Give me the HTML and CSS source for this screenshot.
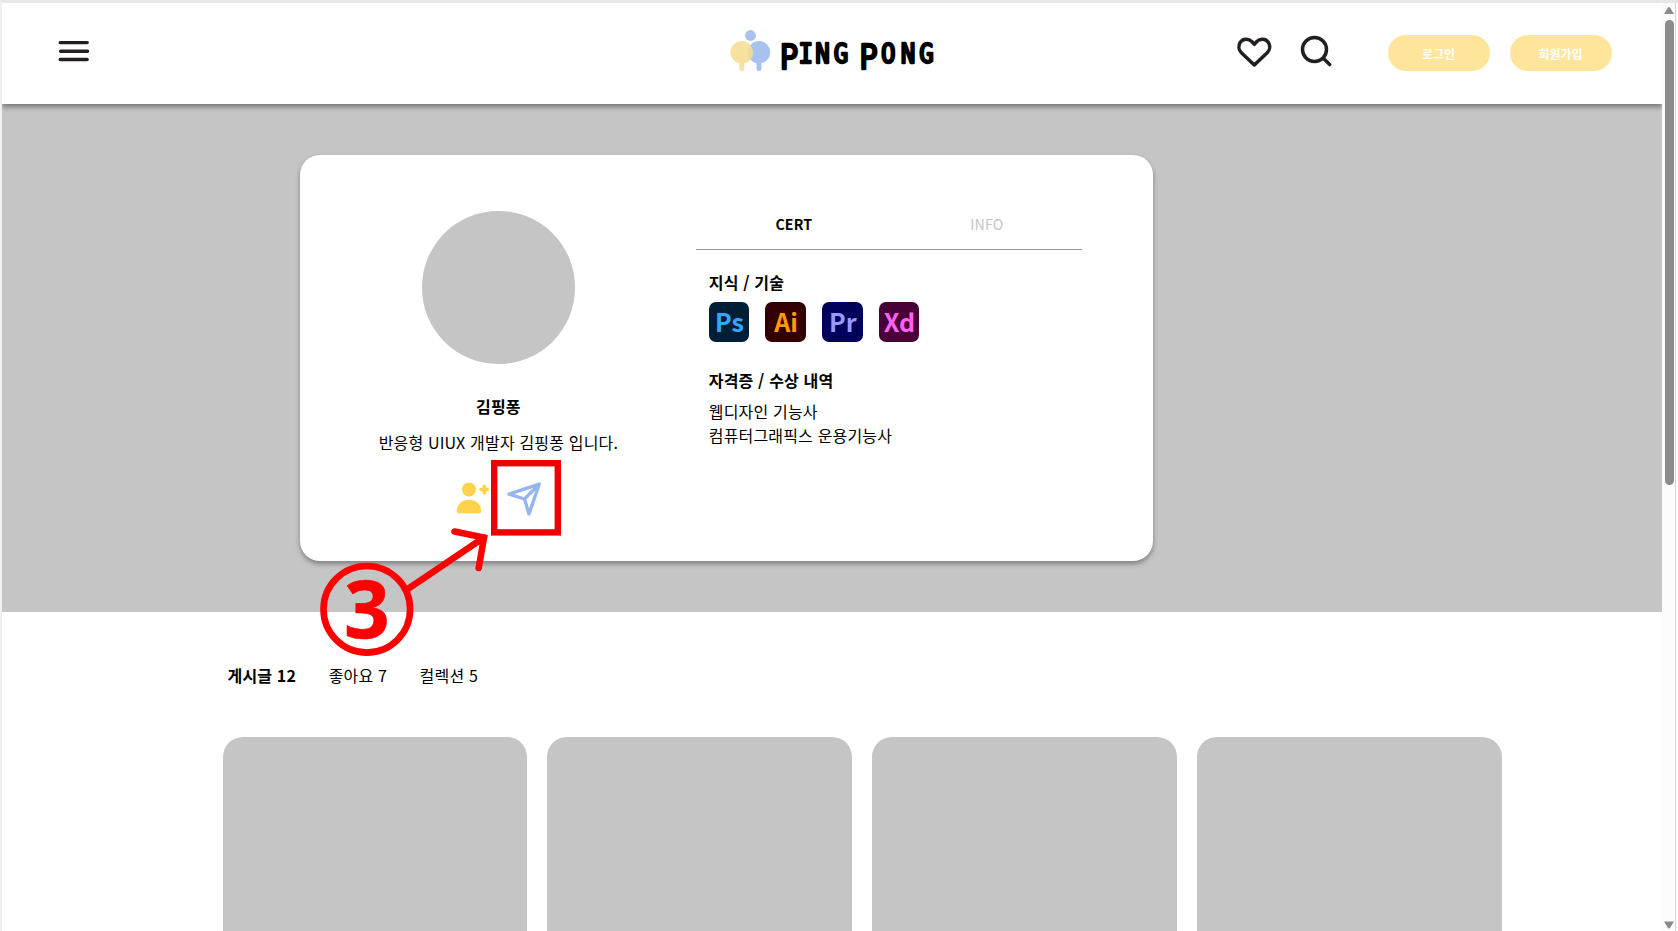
FILE: index.html
```html
<!DOCTYPE html>
<html lang="ko">
<head>
<meta charset="utf-8">
<title>PING PONG</title>
<link rel="stylesheet" href="styles.css">
</head>
<body>
<div class="window">
  <div class="page">
    <header class="header">
      <svg class="menu" width="32" height="22" viewBox="0 0 32 22"><path d="M2.2 2.6h27M2.6 11.2h27M2.2 19.5h27"/></svg>
      <svg class="logo" width="212" height="56" viewBox="0 0 212 56">
        <g fill="#a8c2f0"><circle cx="20.5" cy="7.5" r="5.4"/><circle cx="29" cy="24.3" r="11.2"/><rect x="26.5" y="32" width="5" height="11" rx="2.5"/></g>
        <g fill="#f5dc93" fill-opacity=".87"><path d="M12 13.100a11.200 11.200 0 0 1 2.300 22.160V40.500a2.500 2.500 0 0 1-5 0V35.260A11.200 11.200 0 0 1 12 13.100z"/></g>
        <text class="logo-text" transform="scale(.93 1)"><tspan class="tall" x="53.500" y="40.700">P</tspan><tspan x="73.700 91.600 111.500" y="34.800">ING</tspan> <tspan class="tall" x="138.900" y="40.700">P</tspan><tspan x="162.500 183.500 203.600" y="34.800">ONG</tspan></text>
      </svg>
      <nav class="actions">
        <svg class="heart" width="37" height="32" viewBox="0 0 37 32"><path d="M18.300 8.300L15.800 5.500C12.500 2.200 7 2.500 4.300 6.300C2 9.800 2.700 14 5.400 16.700L18.300 29L31.200 16.700C33.900 14 34.600 9.800 32.300 6.300C29.600 2.500 24.100 2.200 20.800 5.500z"/></svg>
        <svg class="search" width="33" height="33" viewBox="0 0 33 33"><circle cx="14.500" cy="14.500" r="12"/><path d="M23.500 23.500l6.200 6.100"/></svg>
        <button class="pill">로그인</button>
        <button class="pill">회원가입</button>
      </nav>
    </header>
    <section class="hero">
      <article class="card">
        <div class="profile">
          <div class="avatar"></div>
          <h1 class="name">김핑퐁</h1>
          <p class="bio">반응형 UIUX 개발자 김핑퐁 입니다.</p>
          <div class="icons">
            <svg width="34" height="36" viewBox="0 0 34 36" fill="#ffd24d"><circle cx="13" cy="9.500" r="7"/><path d="M.8 31.500C.8 24 6 19.700 13 19.700S25.200 24 25.200 31.500q0 1.800-1.500 1.800H2.300Q.8 33.300.8 31.500z"/><path d="M28.300 6.300v6.600M25 9.600h6.600" fill="none" stroke="#ffd24d" stroke-width="3.500" stroke-linecap="round"/></svg>
            <svg width="36" height="36" viewBox="0 0 36 36" fill="none" stroke="#95b5ee" stroke-width="3.400" stroke-linejoin="round"><path d="M3 14.200L33.200 4.100L23 34L18.500 19z M18.500 19L33.200 4.100"/></svg>
          </div>
        </div>
        <div class="details">
          <div class="tabs"><span class="tab active">CERT</span><span class="tab">INFO</span></div>
          <div class="facts">
            <h2>지식 / 기술</h2>
            <div class="skills"><span class="skill ps">Ps</span><span class="skill ai">Ai</span><span class="skill pr">Pr</span><span class="skill xd">Xd</span></div>
            <h2>자격증 / 수상 내역</h2>
            <p class="certs">웹디자인 기능사<br>컴퓨터그래픽스 운용기능사</p>
          </div>
        </div>
      </article>
    </section>
    <section class="posts">
      <nav class="filters"><b>게시글 12</b><span>좋아요 7</span><span>컬렉션 5</span></nav>
      <div class="grid"><div></div><div></div><div></div><div></div></div>
    </section>
  </div>
  <aside class="scrollbar">
    <svg width="12" height="10" viewBox="0 0 12 10"><path d="M1 9L5 2.500Q6 1.500 7 2.500L11 9z"/></svg>
    <div class="thumb"></div>
    <svg width="12" height="10" viewBox="0 0 12 10"><path d="M1 1.500H11L7 8Q6 9 5 8z"/></svg>
  </aside>
</div>
<svg class="annotation" width="260" height="210" viewBox="310 455 260 210">
  <rect x="494.200" y="463.200" width="63.600" height="69.200" fill="none" stroke="#e00" stroke-width="6.400"/>
  <g fill="none" stroke="#f00" stroke-width="6.600" stroke-linecap="round">
    <circle cx="366.800" cy="609.300" r="43.300"/>
    <path d="M408.500 588.500L484 537.500M454.500 531.500L484 537.500L478.700 568"/>
  </g>
  <text x="366.800" y="638.300" class="step">3</text>
</svg>
</body>
</html>
```
FILE: styles.css
```css
* { box-sizing: border-box; margin: 0; padding: 0; }
html, body { width: 100%; height: 100%; overflow: hidden; }
body {
  position: relative;
  background: #fff;
  color: #000;
  font: 16px/24px "Noto Sans CJK KR", sans-serif;
  letter-spacing: .17px;
}
svg { display: block; flex: none; }
.window {
  display: flex;
  height: 931px;
  border-top: 3px solid #e7e7e7;
  border-left: 2px solid #f0f0f0;
  overflow: hidden;
}
.page { width: 1660px; flex: none; }

.header {
  position: relative;
  display: flex;
  align-items: flex-start;
  height: 101px;
  padding-left: 56px;
  background: #fff;
  box-shadow: 0 3px 5px rgba(0, 0, 0, .4);
  clip-path: inset(0 0 -12px 0);
}
.menu { margin-top: 37px; stroke: #231f20; stroke-width: 3.4; stroke-linecap: round; fill: none; }
.logo { margin: 25px 0 0 640px; }
.logo-text {
  font: 26px "DejaVu Sans Mono", monospace;
  letter-spacing: 0;
  stroke: #000;
  stroke-width: 2.3;
  stroke-linejoin: round;
}
.tall { font-size: 33px; }
.actions { display: flex; margin-left: 294px; }
.heart { margin-top: 32.500px; }
.search { margin: 32px 0 0 27px; }
.heart, .search { fill: none; stroke: #231f20; stroke-width: 3.5; stroke-linejoin: round; stroke-linecap: round; }
.pill {
  width: 102px;
  height: 36px;
  margin: 32px 0 0 20px;
  border: 0;
  border-radius: 18px;
  background: #ffe59b;
  color: #fff;
  font: bold 12px/37px "Noto Sans CJK KR", sans-serif;
}
.search + .pill { margin-left: 54.500px; }

.hero { height: 508px; padding: 51px 0 0 298.400px; background: #c5c5c5; }
.card {
  display: flex;
  width: 853px;
  height: 406px;
  border-radius: 20px;
  background: #fff;
  box-shadow: 0 3px 5px rgba(0, 0, 0, .35);
}
.profile { display: flex; flex-direction: column; align-items: center; width: 396px; padding-top: 56px; }
.avatar { width: 152.500px; height: 152.500px; border-radius: 50%; background: #c5c5c5; }
.name { margin-top: 30px; font-size: 16px; line-height: 24px; }
.bio { margin-top: 12px; white-space: nowrap; }
.icons { display: flex; gap: 15.500px; margin-top: 26px; padding-left: 1px; }
.details { width: 386px; padding-top: 45px; }
.tabs { display: flex; height: 50px; border-bottom: 1px solid #999; }
.tab { flex: 1; padding-left: 2px; text-align: center; font-size: 14.200px; line-height: 48px; color: #c4c4c4; }
.tab.active { color: #000; font-weight: bold; }
.facts { padding: 20px 0 0 12.400px; }
h2 { font-size: 16px; line-height: 24px; }
.skills { display: flex; gap: 16.300px; margin: 8px 0 26px; }
.skill {
  width: 40.400px;
  height: 40.400px;
  padding-left: 1px;
  border-radius: 7px;
  text-align: center;
  font: bold 25px/38px "Noto Sans CJK KR", sans-serif;
}
.ps { background: #001e36; color: #31a8ff; }
.ai { background: #330000; color: #ff9a00; }
.pr { background: #00005b; color: #9999ff; }
.xd { background: #470137; color: #ff61f6; }
.certs { margin-top: 7px; }

.posts { padding: 51px 0 0 220.500px; }
.filters { display: flex; gap: 32.600px; padding-left: 5px; }
.grid { display: grid; grid-template-columns: repeat(4, 304.600px); gap: 20.400px; margin-top: 50px; }
.grid div { height: 304px; border-radius: 20px; background: #c5c5c5; }

.scrollbar {
  display: flex;
  flex-direction: column;
  box-sizing: content-box;
  width: 12px;
  height: 925px;
  padding: 2px 0 1px 1px;
  background: #fcfcfc;
  border-right: 1px solid #d4d4d4;
}
.scrollbar svg { fill: #8b8b8b; }
.scrollbar svg:last-child { margin-top: auto; }
.thumb { width: 9px; height: 465px; margin: 5px 0 0 1.500px; border-radius: 5px; background: #8b8b8b; }

.annotation { position: absolute; left: 310px; top: 455px; }
.step { font: bold 80px "Noto Sans", "Open Sans", sans-serif; letter-spacing: 0; fill: #f00; stroke: #f00; stroke-width: .6; text-anchor: middle; }
```
